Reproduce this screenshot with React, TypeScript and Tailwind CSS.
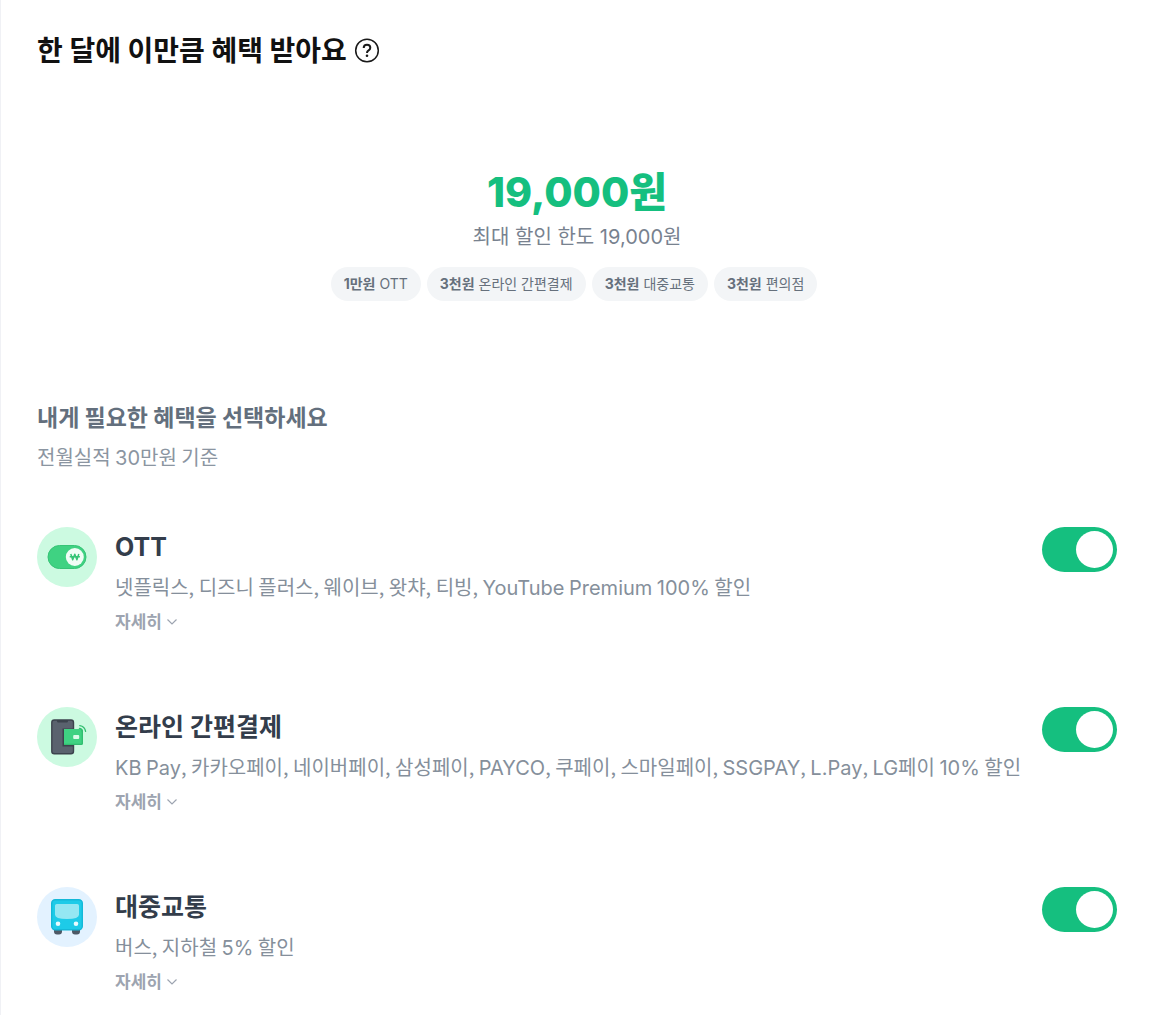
import { useState, type ReactNode } from 'react';

type Benefit = {
  id: string;
  title: string;
  description: string;
  icon: ReactNode;
};

const chips = [
  { amount: '1만원', name: 'OTT' },
  { amount: '3천원', name: '온라인 간편결제' },
  { amount: '3천원', name: '대중교통' },
  { amount: '3천원', name: '편의점' },
];

function SubscriptionIcon() {
  return (
    <svg viewBox="0 0 60 60" className="size-[60px] shrink-0" aria-hidden="true">
      <circle cx="30" cy="30" r="30" fill="#ccfae1" />
      <rect x="11" y="18.5" width="38" height="23" rx="11.5" fill="#3fd282" stroke="#36c476" />
      <circle cx="37.8" cy="30" r="9" fill="#f1fdf6" />
      <path d="M33.8 27l1.900 5.800 2.100-5.600 2.100 5.600 1.900-5.800M32.700 29.800h10.200" fill="none" stroke="#36c476" strokeWidth="1.5" strokeLinejoin="round" />
    </svg>
  );
}

function PaymentIcon() {
  return (
    <svg viewBox="0 0 60 60" className="size-[60px] shrink-0" aria-hidden="true">
      <circle cx="30" cy="30" r="30" fill="#ccfae1" />
      <rect x="14.8" y="13" width="21.7" height="33.8" rx="2.5" fill="#5a626e" stroke="#3c434d" strokeWidth="1.4" />
      <path d="M20 13h11v1.200q0 1.300-1.300 1.300h-8.400q-1.300 0-1.300-1.300z" fill="#3c434d" />
      <path d="M25.500 21.500h11v18h-11z" fill="#3c434d" />
      <path d="M27 22h17.200q1.800 0 1.800 1.800v12.400q0 1.800-1.800 1.800H27z" fill="#3fd282" />
      <path d="M27 37.300h17.200q1.100 0 1.100-1.100V23.800" fill="none" stroke="#32bd70" strokeWidth="1.3" />
      <rect x="36.2" y="28" width="6" height="4" rx="1" fill="#dcfce9" />
      <path d="M42.400 21.400q2.700.3 3 3M42.800 18.600q5 .8 5.800 5.800" fill="none" stroke="#32bd70" strokeWidth="1.3" strokeLinecap="round" />
    </svg>
  );
}

function BusIcon() {
  return (
    <svg viewBox="0 0 60 60" className="size-[60px] shrink-0" aria-hidden="true">
      <circle cx="30" cy="30" r="30" fill="#e3f2ff" />
      <path d="M17 42h8v2.500q0 3-3 3h-2q-3 0-3-3zM35 42h8v2.500q0 3-3 3h-2q-3 0-3-3z" fill="#4e5966" />
      <rect x="14.7" y="12.7" width="30.6" height="30" rx="3.5" fill="#1dcbe8" stroke="#14b8d8" strokeWidth="1.4" />
      <path d="M18 18.800q0-1.800 1.800-1.800h20.400q1.800 0 1.800 1.800v9q0 4.200-12 4.200t-12-4.200z" fill="#94e7f3" />
      <circle cx="21" cy="36.8" r="2.3" fill="#e8fbff" />
      <circle cx="39" cy="36.8" r="2.3" fill="#e8fbff" />
    </svg>
  );
}

const benefits: Benefit[] = [
  {
    id: 'ott',
    title: 'OTT',
    description: '넷플릭스, 디즈니 플러스, 웨이브, 왓챠, 티빙, YouTube Premium 100% 할인',
    icon: <SubscriptionIcon />,
  },
  {
    id: 'pay',
    title: '온라인 간편결제',
    description: 'KB Pay, 카카오페이, 네이버페이, 삼성페이, PAYCO, 쿠페이, 스마일페이, SSGPAY, L.Pay, LG페이 10% 할인',
    icon: <PaymentIcon />,
  },
  {
    id: 'transit',
    title: '대중교통',
    description: '버스, 지하철 5% 할인',
    icon: <BusIcon />,
  },
];

/** Sets Latin words and numbers in Inter; the rest keeps the surrounding Korean face. */
function MixedText({ text }: { text: string }) {
  return text.split(/([A-Za-z0-9.%]+)/).map((part, index) =>
    index % 2 === 1 ? (
      <span key={index} className="font-['Inter',sans-serif] leading-none">
        {part}
      </span>
    ) : (
      part
    ),
  );
}

function BenefitRow({ benefit }: { benefit: Benefit }) {
  const [enabled, setEnabled] = useState(true);
  return (
    <li className="flex items-start">
      {benefit.icon}
      <div className="ml-[18px] min-w-0 flex-1">
        <h3 id={benefit.id} className="text-[25px] leading-10 font-bold text-[#333d4b]">
          {benefit.title}
        </h3>
        <p className="font-['Noto_Sans_CJK_KR',sans-serif] text-xl leading-10 text-[#858f9b]">
          <MixedText text={benefit.description} />
        </p>
        <button type="button" className="flex items-center gap-1 text-[17px] leading-[30px] font-bold text-[#9da4b0]">
          자세히
          <svg viewBox="0 0 12 12" className="size-3" fill="none" stroke="currentColor" strokeWidth="1.2" aria-hidden="true">
            <path d="M1.500 3.500 6 8l4.500-4.500" />
          </svg>
        </button>
      </div>
      <input
        type="checkbox"
        role="switch"
        aria-labelledby={benefit.id}
        checked={enabled}
        onChange={(event) => setEnabled(event.target.checked)}
        className="h-[45px] w-[75px] shrink-0 cursor-pointer appearance-none rounded-full bg-[#d1d6db] p-1 before:block before:size-[37px] before:rounded-full before:bg-white checked:bg-[#15bf7f] checked:before:ml-[30px]"
      />
    </li>
  );
}

export default function App() {
  return (
    <main className="min-h-screen border-l border-[#f0f1f5] bg-white pt-7 pr-8 pb-6 pl-9 font-['Inter','Noto_Sans_CJK_KR',sans-serif]">
      <div className="flex items-center gap-[7px]">
        <h1 className="text-[28px] leading-[46px] font-bold text-[#111111]">한 달에 이만큼 혜택 받아요</h1>
        <button type="button" aria-label="도움말" className="text-[#191919]">
          <svg viewBox="0 0 26 26" className="size-[26px]" fill="none" stroke="currentColor" aria-hidden="true">
            <circle cx="13" cy="12.500" r="11.300" strokeWidth="1.5" />
            <path d="M9.700 10q0-3.300 3.300-3.300t3.300 3q0 1.500-1.700 2.600T13 15" strokeWidth="2" />
            <circle cx="13" cy="17.800" r="1.300" fill="currentColor" stroke="none" />
          </svg>
        </button>
      </div>

      <section className="mt-[90px] flex flex-col items-center">
        <strong className="text-[41px] leading-[56px] font-extrabold text-[#15bf7f]">19,000원</strong>
        <p className="text-xl leading-[34px] text-[#78828f]">최대 할인 한도 19,000원</p>
        <ul className="mt-[13px] flex flex-wrap justify-center">
          {chips.map((chip) => (
            <li key={chip.name} className="mr-1.5 rounded-full bg-[#f3f5f7] px-[13px] text-sm leading-[34px] text-[#66707c]">
              <b className="font-bold">{chip.amount}</b> {chip.name}
            </li>
          ))}
        </ul>
      </section>

      <section className="mt-[95px]">
        <h2 className="font-['Noto_Sans_CJK_KR',sans-serif] text-[23px] leading-10 font-bold text-[#636f7d]">내게 필요한 혜택을 선택하세요</h2>
        <p className="font-['Noto_Sans_CJK_KR',sans-serif] text-xl leading-[42px] text-[#8b95a1]">
          <MixedText text="전월실적 30만원 기준" />
        </p>
        <ul className="mt-[49px] flex flex-col gap-[70px]">
          {benefits.map((benefit) => (
            <BenefitRow key={benefit.id} benefit={benefit} />
          ))}
        </ul>
      </section>
    </main>
  );
}
